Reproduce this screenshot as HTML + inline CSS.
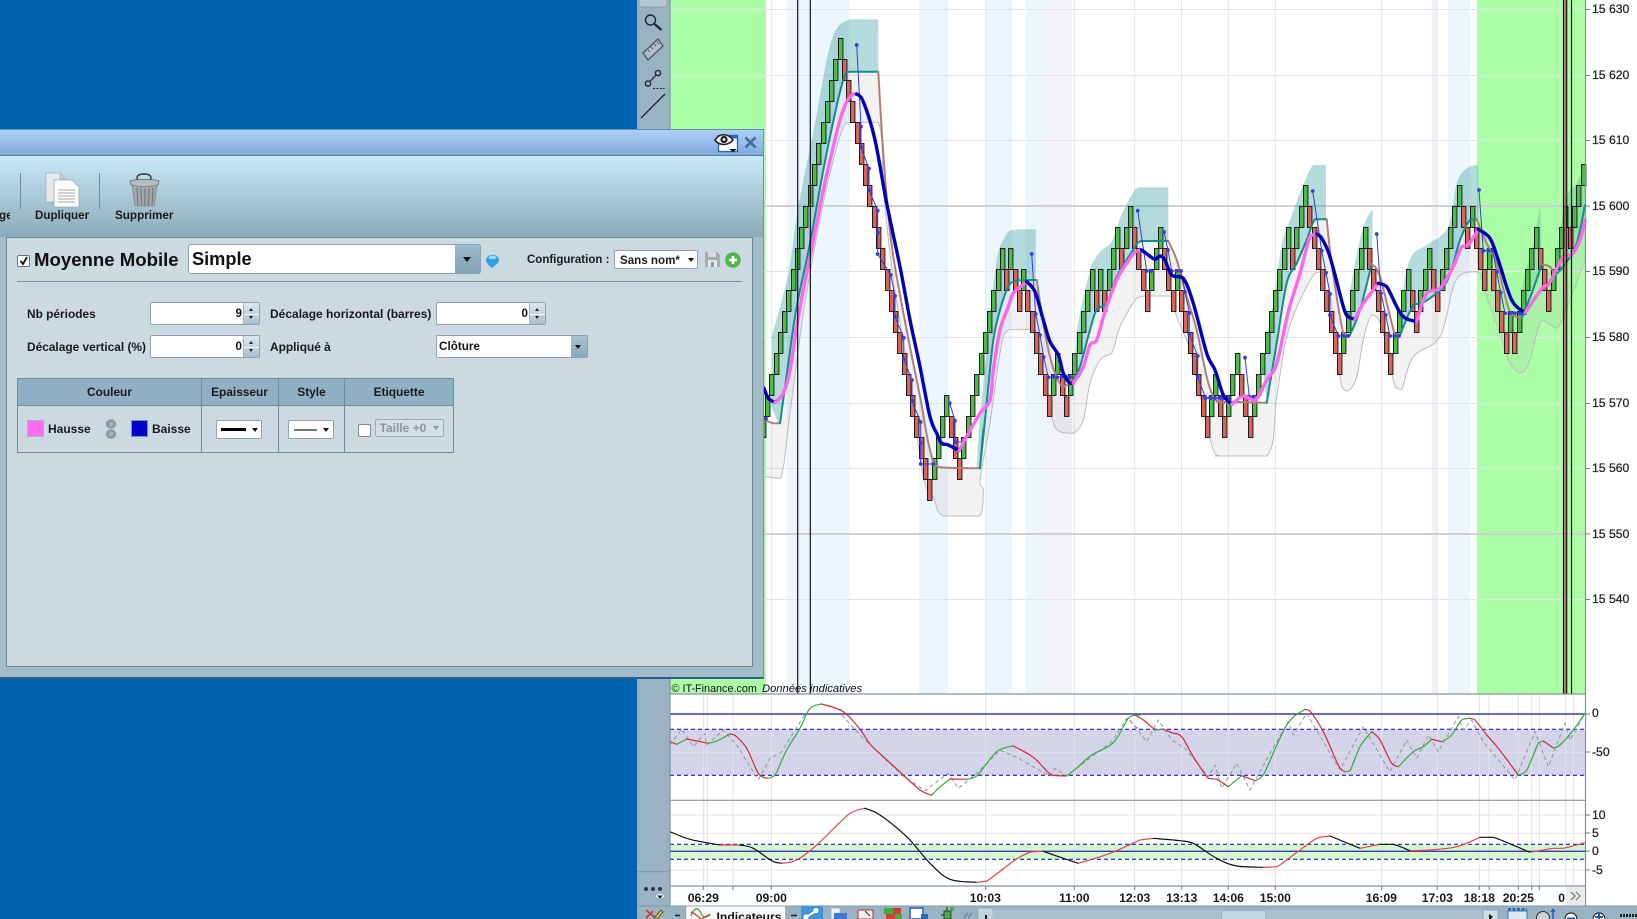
<!DOCTYPE html>
<html lang="fr"><head><meta charset="utf-8"><title>Moyenne Mobile</title>
<style>
html,body{margin:0;padding:0;width:1637px;height:919px;overflow:hidden;background:#0064b0;font-family:"Liberation Sans",sans-serif;color:#111}
.a{position:absolute;white-space:nowrap}
.l{position:absolute;white-space:nowrap;font-size:11.9px;font-weight:bold;line-height:16px;height:16px;color:#1a1a1a}
.box{position:absolute;background:#fff;border:1px solid #8fa3af;border-radius:2px;box-sizing:border-box}
.spin{position:absolute;right:0;top:0;bottom:0;width:16px;background:linear-gradient(#dfe8ee,#a9c0cd);border-left:1px solid #9fb2bd;box-sizing:border-box}
.spin:after{content:"";position:absolute;left:0;right:0;top:50%;height:1px;background:#fff}
.up{position:absolute;left:5px;top:5px;width:0;height:0;border:2.5px solid transparent;border-top:0;border-bottom:3px solid #222}
.dn{position:absolute;left:5px;bottom:5px;width:0;height:0;border:2.5px solid transparent;border-bottom:0;border-top:3px solid #222}
.tri{position:absolute;width:0;height:0;border-left:3.5px solid transparent;border-right:3.5px solid transparent;border-top:4px solid #111}
svg text{font-family:"Liberation Sans",sans-serif}
.ax{font-size:12.2px;fill:#222;stroke:#222;stroke-width:.25px}
.tm{font-size:12.2px;font-weight:bold;fill:#1a1a1a;text-anchor:middle}
</style></head><body>
<svg class="a" style="left:0;top:0" width="1637" height="919" viewBox="0 0 1637 919" xmlns="http://www.w3.org/2000/svg">
<rect width="1637" height="919" fill="#0064b0"/>
<rect x="637" width="33" height="906" fill="#9ab3c2"/>
<rect x="670" width="967" height="906" fill="#fff"/>
<rect x="670" width="96" height="694" fill="#acfea6"/>
<rect x="1477" width="108" height="694" fill="#acfea6"/>
<g fill="#edf5fd"><rect x="786.7" width="63.3" height="694"/><rect x="919" width="29" height="694"/><rect x="985.7" width="26" height="694"/><rect x="1025.7" width="17.5" height="694"/><rect x="1448" width="22" height="694"/></g>
<g fill="#f3f2f9"><rect x="1043" width="29" height="694"/><rect x="1431.7" width="5.6" height="694"/></g>
<g stroke="#e3e5ea" stroke-width="1"><path d="M771.7 0V694M985.7 0V694M1074.3 0V694M1134.7 0V694M1181.5 0V694M1228.3 0V694M1275.3 0V694M1381.7 0V694M1437.3 0V694"/>
<path d="M670 9.5H1585M670 75.5H1585M670 140.5H1585M670 271.5H1585M670 337.5H1585M670 403.5H1585M670 468.5H1585M670 599.5H1585"/></g>
<path d="M670 206H1585M670 534H1585" stroke="#cfcfcf" stroke-width="2"/>
<g id="c"></g>
<path d="M797.7 0V694M810.3 0V694M1563.5 0V694M1566.7 0V694M1571.5 0V694" stroke="#111" stroke-width="1.2"/>
<path d="M1565.1 0V694" stroke="#c8423c" stroke-width="1.4"/>
<rect x="670" y="694" width="915" height="192" fill="#fff"/>
<rect x="670" y="729.3" width="915" height="46" fill="#d3d3ea"/>
<rect x="670" y="844.3" width="915" height="15" fill="#d5f7d2"/>
<g stroke="#e0e3e8" stroke-width="1"><path d="M703.3 694V886M707.3 694V886M733 694V886M771.3 694V886M985.7 694V886M1074.3 694V886M1134.7 694V886M1181.7 694V886M1228.3 694V886M1275.3 694V886M1381.7 694V886M1437.3 694V886M1479.3 694V886M1489 694V886M1518.3 694V886M1531.7 694V886M1539.3 694V886M1565.7 694V886M1573.3 694V886"/>
<path d="M670 752.7H1585M670 815H1585M670 833.3H1585M670 870H1585"/></g>
<path d="M670 714H1585" stroke="#3a3a9e" stroke-width="1.4"/>
<path d="M670 851.3H1585" stroke="#3a3aa8" stroke-width="1.4"/>
<path d="M670 729.3H1585M670 775.3H1585M670 844.3H1585M670 859.3H1585" stroke="#1d1dc4" stroke-width="1.2" stroke-dasharray="4 3"/>
<g id="d"></g>
<path d="M670 694H1585M670 800.3H1585M670 886H1585" stroke="#87959f" stroke-width="1.2"/>
<path d="M670 0V906M1585.5 0V906" stroke="#7f95a5" stroke-width="1.2" fill="none"/>
<path d="M1585 9.5h5M1585 75.5h5M1585 140.5h5M1585 206h5M1585 271.5h5M1585 337.5h5M1585 403.5h5M1585 468.5h5M1585 534h5M1585 599.5h5M1585 714h5M1585 752h5M1585 815h5M1585 833h5M1585 851h5M1585 870h5M703.3 886v4M733 886v4M771.3 886v4M985.7 886v4M1074.3 886v4M1134.7 886v4M1181.7 886v4M1228.3 886v4M1275.3 886v4M1381.7 886v4M1437.3 886v4M1479.3 886v4M1489 886v4M1518.3 886v4M1531.7 886v4M1539.3 886v4" stroke="#6d7b86"/>
<g class="ax">
<text x="1592" y="13">15 630</text><text x="1592" y="79">15 620</text><text x="1592" y="144">15 610</text><text x="1592" y="210">15 600</text><text x="1592" y="275">15 590</text><text x="1592" y="341">15 580</text><text x="1592" y="407">15 570</text><text x="1592" y="472">15 560</text><text x="1592" y="538">15 550</text><text x="1592" y="603">15 540</text>
<text x="1592" y="717">0</text><text x="1592" y="756">-50</text><text x="1592" y="819">10</text><text x="1592" y="837">5</text><text x="1592" y="855">0</text><text x="1592" y="874">-5</text></g>
<text x="671.5" y="692" font-size="10.8" fill="#111">© IT-Finance.com</text>
<text x="762" y="692" font-size="11.2" font-style="italic" fill="#111">Données indicatives</text>
<g class="tm"><text x="703.3" y="902">06:29</text><text x="771.3" y="902">09:00</text><text x="985.3" y="902">10:03</text><text x="1074.3" y="902">11:00</text><text x="1134.7" y="902">12:03</text><text x="1181.7" y="902">13:13</text><text x="1228.3" y="902">14:06</text><text x="1275.3" y="902">15:00</text><text x="1381.3" y="902">16:09</text><text x="1437.3" y="902">17:03</text><text x="1479.3" y="902">18:18</text><text x="1518.3" y="902">20:25</text><text x="1561.7" y="902">0</text></g>
<rect x="1566" y="887" width="19" height="18" fill="#ececec"/>
<path d="M1571 892l4 4-4 4M1576 892l4 4-4 4" fill="none" stroke="#777" stroke-width="1.2"/>
<!-- left tools -->
<rect x="639" y="-3" width="28" height="10" rx="2" fill="#b6c5d0" stroke="#8a9eac"/>
<g fill="none" stroke="#1d2a33" stroke-width="1.4"><circle cx="650.5" cy="20" r="5"/><path d="M654.5 24l7 6" stroke-width="2.4"/>
<path d="M643 53l15-14 5 7-15 14z" stroke="#4a5a66" fill="#aebfca"/><path d="M648 50l2 2M651 47l2 2M654 44l2 2M657 42l2 2" stroke="#4a5a66" stroke-width="1"/>
<circle cx="648" cy="83.5" r="2.6"/><circle cx="658" cy="73" r="2.6"/><path d="M650 81.5l6-6.5" stroke-width="1.2"/><path d="M653 88.5h2M656.5 88.5h2M660 88.5h2M663 88.5h1.5" stroke-width="1"/>
<path d="M641 118l24-24" stroke-width="1.3"/></g>
<path d="M637 871.7H670" stroke="#7f98a8"/>
<g fill="#2c3a44"><circle cx="646" cy="889" r="2"/><circle cx="653" cy="889" r="2"/><circle cx="660" cy="889" r="2"/></g>
<ellipse cx="660" cy="896" rx="4" ry="2" fill="#fff"/><path d="M657 895.5h6l-3 3z" fill="#111"/>
<!-- bottom bar -->
<rect x="637" y="905.5" width="1000" height="14" fill="#9ab3c2"/><path d="M637 906H1637" stroke="#7f98a8"/>
<rect x="685.7" y="906" width="100" height="14" fill="#f9fbfc" stroke="#8fa3af"/>
<path d="M646 910l11 9M646 918l7-7" stroke="#d8322b" stroke-width="1.6"/><path d="M654 918l7-8 2 2-6 7z" fill="#e9c33a" stroke="#222" stroke-width=".6"/>
<path d="M675 915.5h5M791 915.5h6" stroke="#222" stroke-width="1.6"/>
<path d="M691 916c3-9 7-9 10-3s5 5 9 1" fill="none" stroke="#3ea33e" stroke-width="1.3"/><path d="M691 912c4 1 7 5 10 7 3-2 5-3 9-4" fill="none" stroke="#c93a34" stroke-width="1.3"/>
<text x="716.5" y="921" font-size="12.2" font-weight="bold" fill="#111">Indicateurs</text>
<rect x="801" y="906" width="22" height="13" fill="#3a95db"/><path d="M806 917l10-6" stroke="#fff" stroke-width="2"/><circle cx="816" cy="910.5" r="2.6" fill="#fff"/><circle cx="806" cy="917" r="2.6" fill="#fff"/>
<rect x="831" y="908" width="9" height="11" fill="#eef2f6" stroke="#8a9aa5" stroke-width=".6"/><rect x="834" y="913" width="13" height="7" fill="#3d78d6"/>
<rect x="858" y="910" width="15" height="9" fill="#eee" stroke="#a33" stroke-width="1"/><path d="M865 911l5 5" stroke="#222"/>
<rect x="884" y="908" width="9" height="6" fill="#3fae3f"/><rect x="893" y="908" width="8" height="6" fill="#d0403a"/><rect x="886" y="914" width="9" height="5" fill="#d0403a"/><rect x="895" y="914" width="7" height="5" fill="#3fae3f"/>
<rect x="910" y="908" width="13" height="11" fill="#fff" stroke="#2a66c0" stroke-width="1.6"/><rect x="921" y="914" width="7" height="5" fill="#2a66c0"/>
<rect x="944" y="911" width="7" height="8" fill="#4aa84a" stroke="#222" stroke-width=".8"/><path d="M947 907v4M941 915h3" stroke="#222"/><rect x="950" y="907" width="4" height="4" fill="#4aa84a"/>
<path d="M964 918l4-5M968 918l4-5" stroke="#6d7f8b" stroke-width="1.2"/>
<rect x="977.7" y="908" width="15.5" height="12" fill="#c3d4de" stroke="#8fa3af"/><rect x="985" y="915" width="2" height="4" fill="#111"/>
<rect x="993" y="910" width="490" height="10" fill="#aac0ce"/>
<rect x="1221.7" y="910.5" width="44" height="9" fill="#c0d8e6" stroke="#8fa3af" stroke-width=".6"/>
<rect x="1483" y="910" width="15" height="10" fill="#cfdde6" stroke="#8fa3af"/><path d="M1489 914l4 3-4 3z" fill="#111"/>
<rect x="1508" y="911" width="19" height="9" fill="#dfe8ee" stroke="#3a7cc0"/><path d="M1508 909.5h19" stroke="#2a6cb8" stroke-width="3" stroke-dasharray="3 1.5"/>
<circle cx="1543" cy="918" r="6.5" fill="#ccd3d8" stroke="#333"/><path d="M1553 919v-10" stroke="#1f5fd0" stroke-width="1.6"/><path d="M1550.5 912l2.5-4 2.5 4z" fill="#1f5fd0"/>
<circle cx="1571" cy="919" r="6" fill="#fff" stroke="#222" stroke-width="1.2"/><path d="M1567 918.5h8" stroke="#1f4fc0" stroke-width="2"/>
<circle cx="1599" cy="919" r="6" fill="#fff" stroke="#222" stroke-width="1.2"/><path d="M1595 917h8M1599 913v8" stroke="#1f4fc0" stroke-width="2"/>
<path d="M1620 915.5H1637" stroke="#222" stroke-width="3" stroke-dasharray="2 1"/>
</svg>

<!-- dialog -->
<div class="a" style="left:0;top:129px;width:764px;height:550px;background:#a3bcc9;border-top:1px solid #5d8fb8;border-right:1px solid #5f9c9c;border-bottom:2px solid #2f5f88;box-sizing:border-box"></div>
<div class="a" style="left:0;top:130px;width:763px;height:26px;background:linear-gradient(#aed0f6,#82a9dd);border-bottom:1px solid #5b7f95;box-sizing:border-box"></div>
<div class="a" style="left:0;top:156px;width:763px;height:81px;background:linear-gradient(#c8e9f9,#8baaba)"></div>
<div class="a" style="left:6px;top:237px;width:747px;height:430px;background:#cbd9e1;border:1px solid #6e8694;box-sizing:border-box"></div>

<svg class="a" style="left:0;top:130px" width="764" height="110" viewBox="0 130 764 110" xmlns="http://www.w3.org/2000/svg">
<rect x="718.5" y="135.5" width="19" height="16" fill="#fff" stroke="#2a6ab8" stroke-width="1.4"/><rect x="718.5" y="135.5" width="19" height="3" fill="#2a6ab8"/>
<path d="M715 140c4-7 13-7 18 0-5 6-14 6-18 0z" fill="#eef2f5" stroke="#222" stroke-width="1.6"/><circle cx="724" cy="139.5" r="3.6" fill="#222"/><circle cx="724" cy="139.5" r="1.4" fill="#fff"/>
<path d="M729.5 149h7l-3.5 3.5z" fill="#111"/>
<path d="M745.5 137.5l10 10M755.5 137.5l-10 10" stroke="#3d6a96" stroke-width="2.6"/>
<path d="M20.5 173V209M99.5 173V209" stroke="#6f8c9c" stroke-width="1"/>
<path d="M46 173h14l6 6v23H46z" fill="#e7eaec" stroke="#a2adb4" stroke-width=".8"/><path d="M60 173v6h6" fill="#c8cfd4" stroke="#a2adb4" stroke-width=".8"/>
<path d="M54 180h18l7 7v20H54z" fill="#fbfbfb" stroke="#9aa6ad" stroke-width=".8"/>
<path d="M58 190h17M58 193h17M58 196h17M58 199h17M58 202h17" stroke="#a9a9a9" stroke-width="1"/>
<path d="M137 181v-3c0-3 3-4 7-4s7 1 7 4v3" fill="none" stroke="#3d4347" stroke-width="1.5"/>
<path d="M130 181c4-2 25-2 29 0l-1 4c-5 2-22 2-27 0z" fill="#b6bcc0" stroke="#5f686e" stroke-width=".8"/>
<path d="M132 185c6 2 19 2 25 0l-3 21h-19z" fill="#a3a8ab" stroke="#6f777c" stroke-width=".6"/>
<path d="M137 188l1 17M141 188.5l.5 17M145 188.5v17M149 188.5l-.5 17M153 188l-1 17" stroke="#6a7277" stroke-width="1"/>
</svg>
<div class="l" style="left:-1px;top:208px;width:11px;overflow:hidden;text-align:right;font-size:11.6px">ge</div>
<div class="l" style="left:35px;top:208px;font-size:11.6px">Dupliquer</div>
<div class="l" style="left:115px;top:208px;font-size:11.7px">Supprimer</div>

<!-- header row -->
<div class="box" style="left:17px;top:255px;width:13px;height:12px;border-color:#66767f;background:#fff"><svg width="11" height="10" style="display:block"><path d="M2.5 5l2.5 3 4-7" fill="none" stroke="#111" stroke-width="1.8"/></svg></div>
<div class="a" style="left:34px;top:248px;font-size:18.6px;font-weight:bold;line-height:24px;color:#111">Moyenne Mobile</div>
<div class="box" style="left:188px;top:244px;width:293px;height:30px;border-radius:3px"><div class="a" style="left:3px;top:3px;font-size:18.2px;font-weight:bold;line-height:22px;color:#111">Simple</div>
<div class="a" style="right:0;top:0;bottom:0;width:25px;background:linear-gradient(#9dbccd,#7fa1b6)"><div class="tri" style="left:8px;top:12px;border-left-width:4.5px;border-right-width:4.5px;border-top-width:5px"></div></div></div>
<svg class="a" style="left:485px;top:254px" width="16" height="15"><path d="M7 14C4 11.5 1 9 1 6c0-3 3-5 6.5-5S14 3 14 6c0 3-4 5.5-7 8z" fill="#2f9fe0"/><ellipse cx="7.5" cy="3.5" rx="4" ry="1.6" fill="#a9dcf7"/></svg>
<div class="l" style="left:527px;top:252px;font-size:11.5px">Configuration :</div>
<div class="box" style="left:614px;top:250px;width:84px;height:19px"><div class="l" style="left:5px;top:2px;font-size:11.6px">Sans nom*</div><div class="tri" style="left:73px;top:7px"></div></div>
<svg class="a" style="left:705px;top:252px" width="15" height="15"><path d="M0 0h12l3 3v12H0z" fill="#a5adb3"/><rect x="3" y="0" width="8" height="5" fill="#d5dadd"/><rect x="3" y="8" width="9" height="7" fill="#e4e7e9"/><rect x="6" y="10" width="3" height="5" fill="#8f979d"/></svg>
<svg class="a" style="left:725px;top:252px" width="16" height="16"><circle cx="8" cy="8" r="7.8" fill="#4cb848"/><path d="M8 4v8M4 8h8" stroke="#fff" stroke-width="2.6"/></svg>
<div class="a" style="left:17px;top:281px;width:725px;height:1px;background:#7f919c"></div>

<!-- fields -->
<div class="l" style="left:27px;top:306px">Nb périodes</div>
<div class="box" style="left:150px;top:302px;width:110px;height:23px"><div class="a" style="right:17px;top:3px;font-size:11.6px;font-weight:bold;line-height:16px">9</div><div class="spin"><div class="up"></div><div class="dn"></div></div></div>
<div class="l" style="left:270px;top:306px;font-size:12px">Décalage horizontal (barres)</div>
<div class="box" style="left:436px;top:302px;width:110px;height:23px"><div class="a" style="right:17px;top:3px;font-size:11.6px;font-weight:bold;line-height:16px">0</div><div class="spin"><div class="up"></div><div class="dn"></div></div></div>
<div class="l" style="left:27px;top:339px">Décalage vertical (%)</div>
<div class="box" style="left:150px;top:335px;width:110px;height:23px"><div class="a" style="right:17px;top:3px;font-size:11.6px;font-weight:bold;line-height:16px">0</div><div class="spin"><div class="up"></div><div class="dn"></div></div></div>
<div class="l" style="left:270px;top:339px">Appliqué à</div>
<div class="box" style="left:436px;top:335px;width:152px;height:23px"><div class="l" style="left:2px;top:3px;font-size:11.7px">Clôture</div><div class="a" style="right:0;top:0;bottom:0;width:16px;background:linear-gradient(#a9c2d0,#8aa9bc)"><div class="tri" style="left:4px;top:9px"></div></div></div>

<!-- table -->
<div class="a" style="left:17px;top:378px;width:437px;height:75px;border:1px solid #74899a;box-sizing:border-box"></div>
<div class="a" style="left:18px;top:379px;width:435px;height:27px;background:#90b0c4;border-bottom:1px solid #74899a;box-sizing:border-box"></div>
<div class="a" style="left:201px;top:378px;width:1px;height:75px;background:#74899a"></div>
<div class="a" style="left:278px;top:378px;width:1px;height:75px;background:#74899a"></div>
<div class="a" style="left:344px;top:378px;width:1px;height:75px;background:#74899a"></div>
<div class="l" style="left:18px;top:384px;width:183px;text-align:center">Couleur</div>
<div class="l" style="left:202px;top:384px;width:75px;text-align:center">Epaisseur</div>
<div class="l" style="left:279px;top:384px;width:65px;text-align:center">Style</div>
<div class="l" style="left:345px;top:384px;width:108px;text-align:center">Etiquette</div>
<div class="a" style="left:27px;top:420px;width:17px;height:17px;background:#ff6cf0;border:1px solid #a9b6be;box-sizing:border-box"></div>
<div class="l" style="left:48px;top:421px;font-size:12px">Hausse</div>
<svg class="a" style="left:105px;top:419px" width="13" height="21"><ellipse cx="6" cy="5" rx="5.2" ry="4.8" fill="#8b9ba6"/><ellipse cx="6" cy="15" rx="5.2" ry="4.8" fill="#8b9ba6"/><ellipse cx="6" cy="5" rx="2" ry="2.3" fill="#a6b4bc"/><ellipse cx="6" cy="15" rx="2" ry="2.3" fill="#a6b4bc"/></svg>
<div class="a" style="left:131px;top:420px;width:17px;height:17px;background:#0000c8;border:1px solid #7f8fb0;box-sizing:border-box"></div>
<div class="l" style="left:152px;top:421px;font-size:12px">Baisse</div>
<div class="box" style="left:216px;top:420px;width:46px;height:19px"><div class="a" style="left:4px;top:7px;width:25px;height:3px;background:#000"></div><div class="tri" style="left:35px;top:7px"></div></div>
<div class="box" style="left:288px;top:420px;width:46px;height:19px"><div class="a" style="left:5px;top:8px;width:23px;height:2px;background:#777"></div><div class="tri" style="left:34px;top:7px"></div></div>
<div class="box" style="left:358px;top:424px;width:13px;height:13px;border-radius:2px;border-color:#7b8b96"></div>
<div class="box" style="left:375px;top:419px;width:69px;height:18px;background:#d3dee5;border-color:#9cadb8"><div class="l" style="left:3.5px;top:0;color:#8d979d;font-size:12px">Taille +0</div><div class="tri" style="left:57px;top:6px;border-top-color:#8d979d"></div></div>

<script>
(function(){
var NS='http://www.w3.org/2000/svg',C=document.getElementById('c'),D=document.getElementById('d');
function Z(x0,y0){return function(a){var o=[];for(var i=0;i<a.length;i+=2)o.push([x0+a[i]/3,y0+a[i+1]/3]);return o}}
var z7=Z(760,30),z8=Z(980,170),z4=Z(1200,130),z5=Z(630,670),z6=Z(1130,670);
function f(n){return n.toFixed(1)}
function cl(v,a,b){var lo=Math.min(a,b),hi=Math.max(a,b);return v<lo?lo:v>hi?hi:v}
/* smooth curve through points; control points are clamped so flat stretches stay flat */
function curve(p,start){var d=start+f(p[0][0])+','+f(p[0][1]);for(var i=0;i<p.length-1;i++){var a=p[i-1]||p[i],b=p[i],c=p[i+1],e=p[i+2]||c;
var c1x=b[0]+(c[0]-a[0])/6,c1y=cl(b[1]+(c[1]-a[1])/6,b[1],c[1]),c2x=c[0]-(e[0]-b[0])/6,c2y=cl(c[1]-(e[1]-b[1])/6,b[1],c[1]);
c1x=cl(c1x,b[0],c[0]);c2x=cl(c2x,b[0],c[0]);
d+='C'+f(c1x)+','+f(c1y)+' '+f(c2x)+','+f(c2y)+' '+f(c[0])+','+f(c[1])}return d}
function E(par,tag,at){var e=document.createElementNS(NS,tag);for(var k in at)e.setAttribute(k,at[k]);par.appendChild(e);return e}
function L(par,p,col,w,dash,straight){var d=straight?'M'+p.map(function(q){return f(q[0])+','+f(q[1])}).join('L'):curve(p,'M');var a={d:d,fill:'none',stroke:col,'stroke-width':w,'stroke-linejoin':'round','stroke-linecap':'round'};if(dash){a['stroke-dasharray']=dash;a['stroke-linecap']='butt'}E(par,'path',a)}
function F(par,p,col,op){E(par,'path',{d:curve(p,'M')+'Z',fill:col,'fill-opacity':op})}

/* moving-average guide segments */
var T='#0f8f8a',B='#b07f7a';
var seg=[
[B,z7([15,1170,40,1180,60,1180])],
[T,z7([60,1180,85,1000,110,830,150,640,190,420,225,250,250,150,270,125,355,125])],
[B,z7([355,125,365,300,380,500,400,680,440,900,480,1100,510,1260,540,1312,660,1315])],
[T,z7([660,1315,670,1200]).concat(z8([0,895,20,700,40,510,60,420,85,350,110,332,170,330]))],
[B,z8([170,330,190,460,210,560,230,620,250,650,280,630])],
[T,z8([280,630,300,590,330,480,350,420,385,395,410,320,460,240,485,213,565,213])],
[B,z8([565,213,590,270,620,380,650,480,680,620,700,680,720,695,755,700]).concat(z4([50,815,200,818]))],
[T,z4([200,818,230,640,260,460,290,400,320,330,345,268,380,268])],
[B,z4([380,268,395,400,430,610,450,615])],
[T,z4([450,615,480,540,515,402])],
[B,z4([515,402,540,440,585,615,600,615])],
[T,z4([600,615,640,525,670,518,740,455,780,330,810,270,830,268])],
[B,z4([830,268,860,340,890,400,930,545,965,565])],
[T,z4([965,565,995,490,1025,403])],
[B,z4([1025,403,1050,410,1065,435])],
[T,z4([1065,435,1090,410,1130,340,1155,225])]
];
var top=[];seg.forEach(function(s){top=top.concat(s[1])});
var low=z7([15,1340,62,1345,90,1150,130,850,170,620,210,430,250,290,270,277,355,277,372,500,400,750,440,1000,490,1340,520,1400,550,1458,660,1458,670,1380])
 .concat(z8([0,930,30,760,60,550,85,480,165,478,180,540,215,740,240,785,280,790,310,750,330,640,360,570,385,555,400,540,420,470,470,385,500,378,570,378,590,440,630,540,670,720,700,840,720,858,780,858]))
 .concat(z4([45,978,200,978,230,800,260,620,300,510,345,430,370,425,390,490,425,770,445,783,470,740,490,630,515,555,545,590,585,770,605,778,640,680,720,620,760,470,790,430,835,425,860,500,900,610,930,700,965,728,990,690,1025,570,1070,595,1110,510,1155,390]));
E(C,'path',{d:'M'+top.map(function(q){return f(q[0])+','+f(q[1])}).join('L')+curve(low.slice().reverse(),'L')+'Z',fill:'#9a9a9a','fill-opacity':.13});
L(C,low,'#bdbdbd',1);

/* teal upper bands */
var BC='#2f9a9c',BO=.36;
F(C,z7([35,920,85,730,115,530,165,280,215,30,270,-32,355,-32,355,125,270,125,250,150,225,250,190,420,150,640,110,830,85,1000,60,1180,35,1130]),BC,BO);
F(C,z8([-10,895,0,740,20,540,35,400,52,260,70,210,95,180,167,178,167,330,110,332,85,350,60,420,40,510,20,700,0,895]),BC,BO);
F(C,z8([280,630,300,590,330,480,350,420,385,395,410,320,460,240,485,213,565,213,565,52,480,52,455,75,420,145,395,215,365,240,340,275,330,300,300,430,290,490]),BC,BO);
F(C,z4([200,818,230,640,260,460,290,400,320,330,345,268,378,268,377,105,340,105,310,165,270,270,245,345,225,490,205,600,190,720]),BC,BO);
F(C,z4([450,615,480,540,515,402,518,240,490,290,465,400,450,490,450,560]),BC,BO);
F(C,z4([600,615,640,525,670,518,740,455,780,330,810,270,835,268,835,105,800,115,770,160,745,290,680,345,640,370,620,420,605,510]),BC,BO);
F(C,z4([965,565,995,490,1025,403,1020,235,1000,340,975,430,965,480]),BC,.25);
F(C,z4([1065,435,1090,410,1130,340,1155,225,1155,110,1130,160,1095,210,1075,360]),BC,.28);

/* bricks */
var runs="U18 D21 U4 D3 U7 U3 D1 U1 D2 U1 D6 U2 D2 U6 D1 U1 D1 U3 D1 U2 D4 U3 D3 U1 D7 U2 D2 U3 D3 U9 D1 U3 D8 U6 D6 U4 D2 U3 D2 U5 D2 U1 D3 U1 D4 U1 D1 U5 D3 U4 D1 U3".split(' ');
var k=18,i=0;
function brick(i,k,g){var x=Math.round(765+4.27*(i-1));E(C,'rect',{x:x+.45,y:38.5+21*k,width:4.5,height:21,fill:g?'#4dba4a':'#d6645b',stroke:'#111','stroke-width':.9})}
brick(0,18,true);
runs.forEach(function(r){var up=r[0]=='U',n=+r.slice(1);for(var j=0;j<n;j++){i++;k+=up?-1:1;brick(i,k,up)}});

/* small blue pivots */
var pv=[z7([290,45,303,290,303,352,327,416,327,480,353,542,353,608,353,672,392,735,405,798,405,860,431,923,431,987,456,1050,456,1113,482,1176,482,1239,482,1302,520,1302]),
z7([569,1120,585,1172,585,1236,608,1236]),
z8([155,252,167,432,180,495,191,561,205,622,220,620,232,622,245,620,258,620,270,622]),
z8([473,122,500,303,513,303]),
z8([552,186,564,240,575,303,590,303,603,303,615,366,628,429,628,492,653,558,653,622,677,684,692,684,705,684,718,684,730,684,745,684]),
z4([15,803,30,803,45,803,60,803,85,803]),
z4([135,683,148,800,160,800]),
z4([338,183,365,362,378,428,390,492,390,555,415,618,430,618,445,618]),
z4([530,312,543,490,557,555,570,618,585,618,597,618]),
z4([837,180,850,362,865,362,878,362,890,425,902,488,915,550,930,550,945,550,960,550,975,550]),
z7([18,1166])];
var PC='#3b3bdc';

/* MA lines */
seg.forEach(function(s){L(C,s[1],s[0],2)});
pv.forEach(function(p){if(p.length>1)L(C,p,PC,1,null,true);p.forEach(function(q){E(C,'circle',{cx:f(q[0]),cy:f(q[1]),r:1.9,fill:PC})})});
var P='#ff66ee',Q='#0000b4';
var ma=[
[Q,z7([12,1075,25,1105,45,1117])],
[P,z7([45,1117,70,1090,90,1020,110,890,130,780,150,680,170,580,190,480,215,370,240,270,260,215,280,192,290,192])],
[Q,z7([290,192,310,215,345,330,380,520,420,710,450,870,480,1010,510,1160,530,1210,545,1240,565,1245,597,1262])],
[P,z7([597,1262,625,1210,660,1150,690,1110]).concat(z8([40,600,60,480,85,410,100,370,140,335]))],
[Q,z8([140,335,165,365,190,450,210,515,235,555,250,610,270,640,280,640])],
[P,z8([280,640,310,590,330,525,350,510,375,425,410,330,430,295,465,245,485,240])],
[Q,z8([485,240,505,255,525,268,540,258,555,270,575,315,610,325,640,400,680,550,705,600,730,675,755,703])],
[P,z4([95,823,130,798,165,812,200,750,230,700,265,545,300,430,330,320,350,312])],
[Q,z4([350,312,365,325,390,380,430,530,445,560,465,567])],
[P,z4([465,567,490,520,535,460])],
[Q,z4([535,460,560,470,605,555,650,575])],
[P,z4([650,575,680,490,720,475,760,410,785,350,805,345,835,298])],
[Q,z4([835,298,870,325,895,390,935,510,975,548])],
[P,z4([975,548,1030,470,1045,465,1090,380,1115,375,1140,330,1155,270])]
];
ma.forEach(function(s){L(C,s[1],s[0],3.4)});

/* RSI */
var G='#2fae3a',R='#d62a3a',K='#111';
L(D,z5([120,225,155,178,190,230,225,190,230,225,280,180,320,225,385,330,420,265,455,245,520,140,530,130]),'#9a9aa2',1.1,'4 3',true);
L(D,z5([635,135,700,205,760,262,820,318,885,362,955,310,985,355,1040,310,1110,240,1165,265,1260,318,1275,295,1310,318,1385,260,1445,215,1490,145,1530,180]),'#9a9aa2',1.1,'4 3',true);
L(D,z6([0,150,50,215,85,150,125,210,165,235,235,320,255,285,275,355,320,280,360,360,420,250,475,155,490,195,530,130,630,300,700,170,780,305,830,210,860,265,895,195,925,245,985,140,1000,180,1025,150,1060,215,1155,330,1215,185,1255,290,1305,160,1320,210,1365,130]),'#9a9aa2',1.1,'4 3',true);
[[R,z5([120,215,140,223])],[G,z5([140,223,170,207])],[R,z5([170,207,235,220])],[G,z5([235,220,262,212,300,192])],[R,z5([300,192,315,196,350,235,385,310,412,325])],[G,z5([412,325,435,315,470,240,510,175,540,115,575,102])],[R,z5([575,102,640,125,690,178,720,222,760,260,820,315,870,360,905,376])],[G,z5([905,376,925,355,960,327])],[R,z5([960,327,1010,328])],[G,z5([1010,328,1040,318,1100,245,1150,228])],[R,z5([1150,228,1210,262,1265,315,1310,318])],[G,z5([1310,318,1345,290,1385,255,1450,218,1495,145,1515,135,1530,135]).concat(z6([15,135]))],
[R,z6([15,135,40,150,75,180])],[G,z6([75,180,100,177])],[R,z6([100,177,125,188,155,200,190,260,235,325,260,328,295,350])],[G,z6([295,350,335,317])],[R,z6([335,317,375,332])],[G,z6([375,332,400,315,470,165,525,118])],[R,z6([525,118,540,123,580,185,625,285,645,305])],[G,z6([645,305,660,302,690,230,725,185])],[R,z6([725,185,750,210,785,280,805,290])],[G,z6([805,290,850,245,880,230,905,208])],[R,z6([905,208,935,215])],[G,z6([935,215,965,195,995,150,1020,145])],[R,z6([1020,145,1035,150,1070,195,1105,235,1165,315])],[G,z6([1165,315,1190,300,1225,220,1240,213])],[R,z6([1240,213,1270,234])],[G,z6([1270,234,1290,225,1330,180,1365,130])]
].forEach(function(s){L(D,s[1],s[0],1.2)});

/* MACD */
var RR='#e8434a';
[[K,z5([120,485,180,508,270,525])],[RR,z5([270,525,330,525])],[K,z5([330,525,370,535,425,572,455,580])],[RR,z5([455,580,500,570,560,525,660,430,705,415])],[K,z5([705,415,750,435,830,500,900,580,960,628,1040,637])],[RR,z5([1040,637,1070,633,1155,570,1200,547,1240,544])],[K,z5([1240,544,1300,565,1345,580])],[RR,z5([1345,580,1440,550,1530,510]).concat(z6([30,510,70,505]))],
[K,z6([70,505,150,512,190,520,260,565,320,588,400,592])],[RR,z6([400,592,440,590,490,555,560,505,600,498])],[K,z6([600,498,690,535])],[RR,z6([690,535,750,523])],[K,z6([750,523,790,523,840,542])],[RR,z6([840,542,900,540,980,530,1050,502])],[K,z6([1050,502,1090,502,1200,547])],[RR,z6([1200,547,1270,535,1300,535,1365,518])]
].forEach(function(s){L(D,s[1],s[0],1.2)});
})();
</script>
</body></html>
